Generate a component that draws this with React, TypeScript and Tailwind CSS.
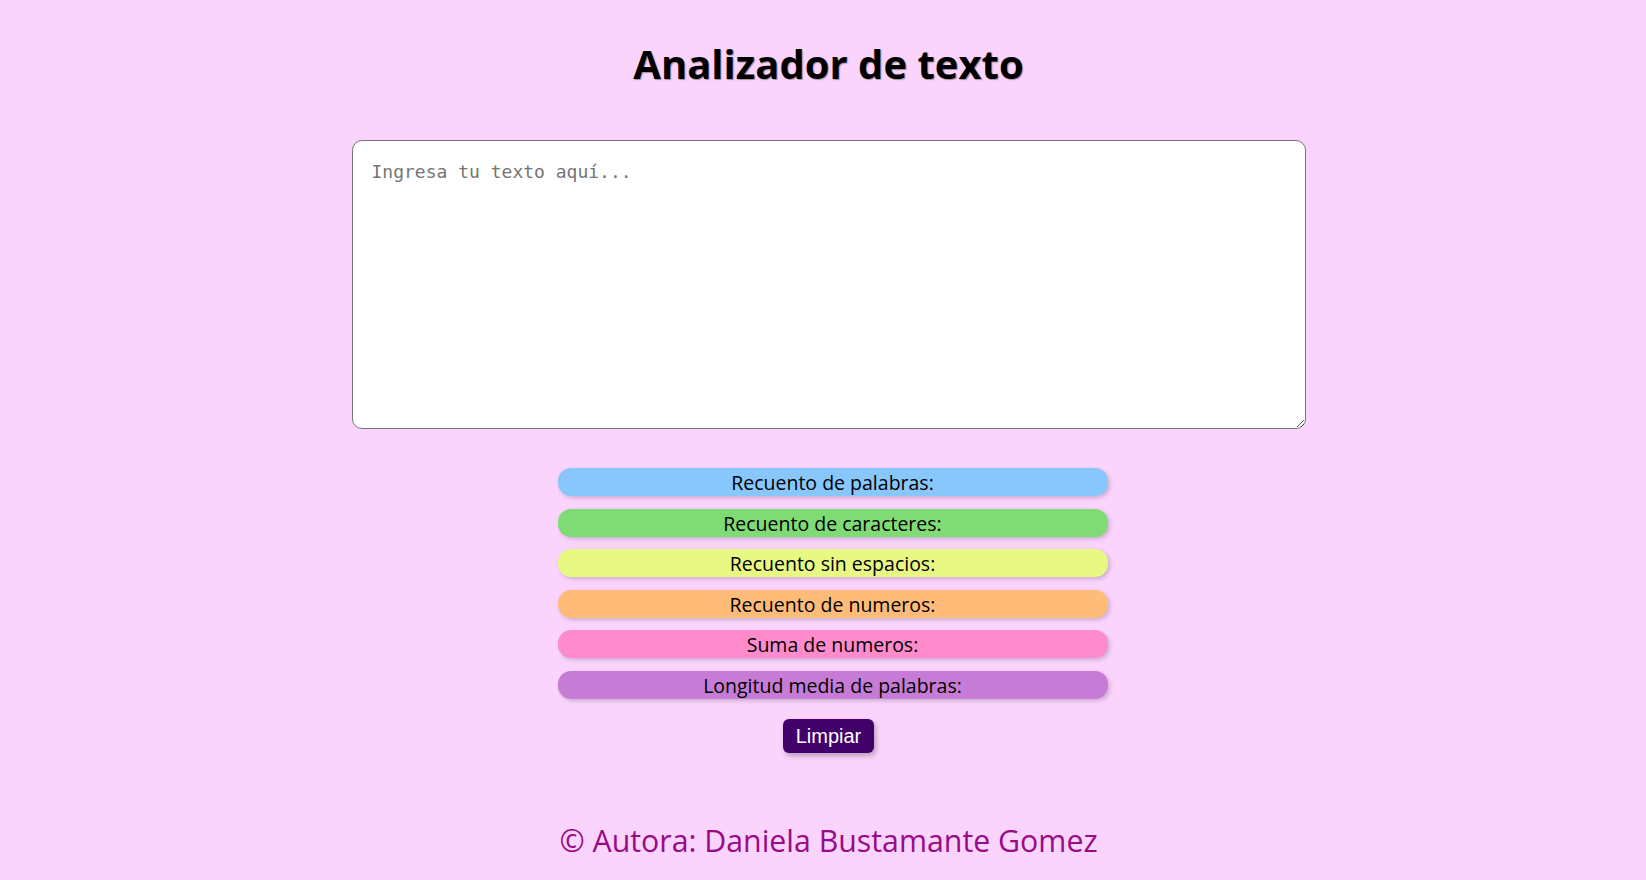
import React from "react";

const bars = [
  { label: "Recuento de palabras:", cls: "bg-[#87c7fc]" },
  { label: "Recuento de caracteres:", cls: "bg-[#7fdc74]" },
  { label: "Recuento sin espacios:", cls: "bg-[#e8f983]" },
  { label: "Recuento de numeros:", cls: "bg-[#ffbc78]" },
  { label: "Suma de numeros:", cls: "bg-[#ff8acc]" },
  { label: "Longitud media de palabras:", cls: "bg-[#c67cd6]" },
];

export default function App() {
  return (
    <div className="min-h-screen w-full bg-[#fad4fc] flex flex-col items-center pl-[11px] font-['Comic_Sans_MS','Open_Sans',sans-serif]">
      <h1 className="mt-[40px] text-[40px] leading-[48px] font-bold text-black [text-shadow:1px_1px_1px_rgba(0,0,0,0.35)]">
        Analizador de texto
      </h1>
      <textarea
        className="mt-[52px] w-[954px] h-[289px] bg-white border border-[#767676] rounded-[10px] px-[19px] pt-[17px] pb-[14px] text-[18px] font-['DejaVu_Sans_Mono',monospace] placeholder:text-[#757575] resize-y outline-none"
        placeholder="Ingresa tu texto aquí..."
      />
      <div className="mt-[39px] pl-[8px] flex flex-col gap-[12.5px]">
        {bars.map((b) => (
          <div
            key={b.label}
            className={`w-[550px] h-[28px] pt-[2px] rounded-[13px] ${b.cls} shadow-[2px_2px_4px_rgba(0,0,0,0.18)] flex items-center justify-center text-[19.5px] text-black`}
          >
            {b.label}
          </div>
        ))}
      </div>
      <button className="mt-[20px] w-[91px] h-[34px] rounded-[6px] bg-[#41006a] text-white text-[20px] font-['Liberation_Sans',Arial,sans-serif] shadow-[2px_3px_5px_rgba(0,0,0,0.25)]">
        Limpiar
      </button>
      <footer className="mt-[68px] text-[30.3px] leading-[40px] text-[#990a86]">
        © Autora: Daniela Bustamante Gomez
      </footer>
    </div>
  );
}
